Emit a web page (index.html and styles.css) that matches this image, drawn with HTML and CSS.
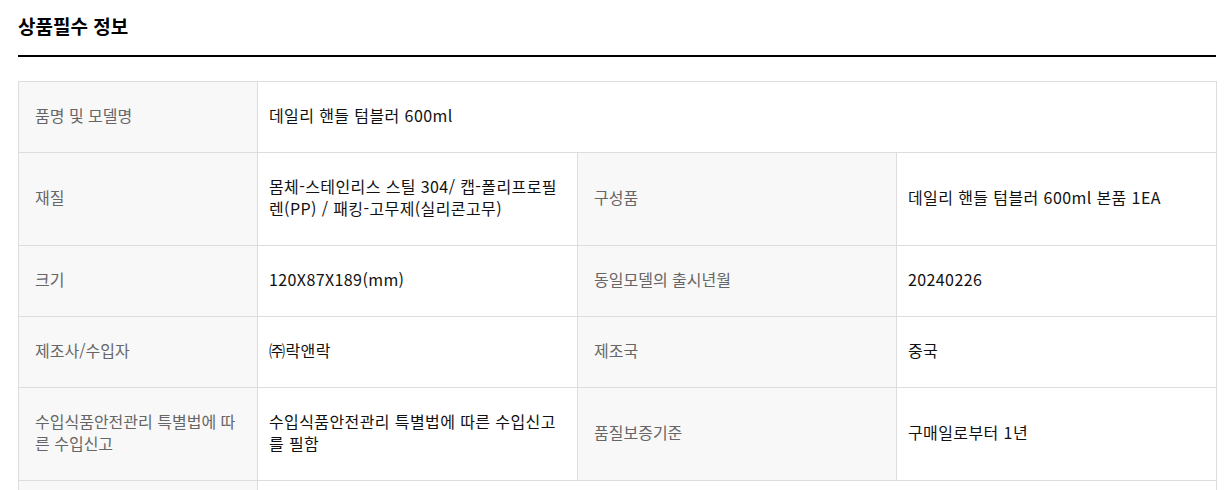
FILE: index.html
```html
<!DOCTYPE html>
<html lang="ko">
<head>
<meta charset="utf-8">
<title>상품필수 정보</title>
<link rel="stylesheet" href="styles.css">
</head>
<body>
<section class="info">
  <h2 class="info-title">상품필수 정보</h2>
  <table class="info-table">
    <colgroup>
      <col class="c-label">
      <col class="c-value">
      <col class="c-label2">
      <col class="c-value2">
    </colgroup>
    <tbody>
      <tr>
        <th>품명 및 모델명</th>
        <td colspan="3">데일리 핸들 텀블러 600ml</td>
      </tr>
      <tr>
        <th>재질</th>
        <td>몸체-스테인리스 스틸 304/ 캡-폴리프로필렌(PP) / 패킹-고무제(실리콘고무)</td>
        <th>구성품</th>
        <td>데일리 핸들 텀블러 600ml 본품 1EA</td>
      </tr>
      <tr>
        <th>크기</th>
        <td>120X87X189(mm)</td>
        <th>동일모델의 출시년월</th>
        <td>20240226</td>
      </tr>
      <tr>
        <th>제조사/수입자</th>
        <td>㈜락앤락</td>
        <th>제조국</th>
        <td>중국</td>
      </tr>
      <tr>
        <th>수입식품안전관리 특별법에 따른 수입신고</th>
        <td>수입식품안전관리 특별법에 따른 수입신고를 필함</td>
        <th>품질보증기준</th>
        <td>구매일로부터 1년</td>
      </tr>
      <tr class="row-empty">
        <th></th>
        <td colspan="3"></td>
      </tr>
    </tbody>
  </table>
</section>
</body>
</html>
```

FILE: styles.css
```css
html, body {
  margin: 0;
  padding: 0;
  background: #fff;
}

body {
  font-family: "Noto Sans CJK KR", "Noto Sans", sans-serif;
  color: #111;
}

.info {
  padding: 12px 8px 0 18px;
}

.info-title {
  margin: 0;
  height: 28px;
  line-height: 28px;
  padding-bottom: 15px;
  border-bottom: 2px solid #000;
  font-size: 19px;
  font-weight: 700;
  color: #000;
  width: 1198px;
}

.info-table {
  margin-top: 24px;
  width: 1198px;
  table-layout: fixed;
  border-collapse: collapse;
  border: 1px solid #ddd;
}

.c-label { width: 239px; }
.c-value { width: 320px; }
.c-label2 { width: 319px; }
.c-value2 { width: 320px; }

.info-table th,
.info-table td {
  border: 1px solid #ddd;
  padding: 22px 12px 26px;
  line-height: 22px;
  text-align: left;
  vertical-align: middle;
}

.info-table th {
  background: #f8f8f8;
  color: #666;
  font-weight: 400;
  font-size: 16px;
  padding-left: 16px;
  padding-right: 16px;
}

.info-table td {
  color: #111;
  font-size: 16px;
  letter-spacing: 0.4px;
  padding-left: 11px;
  background: #fff;
}

.row-empty th,
.row-empty td {
  height: 22px;
}
```
